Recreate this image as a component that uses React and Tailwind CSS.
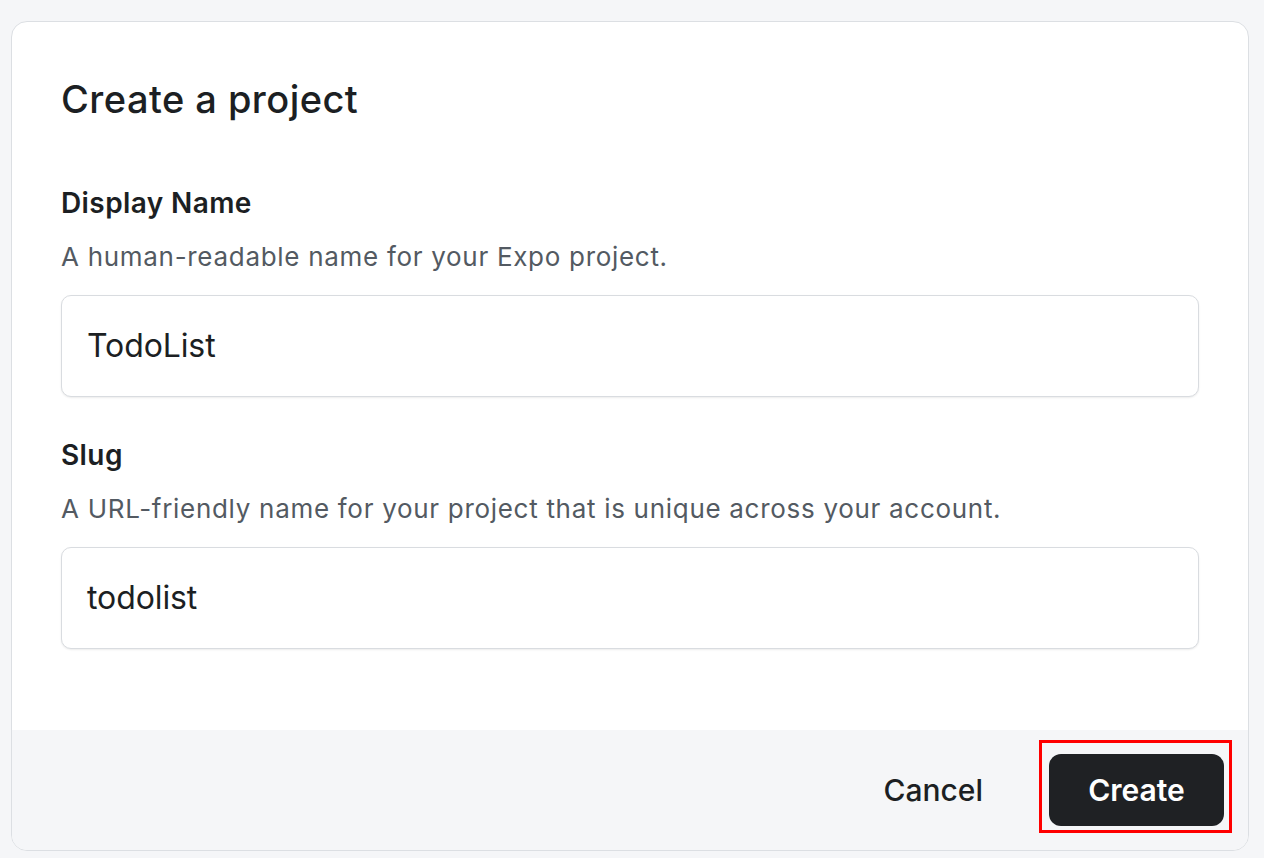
const FIELDS = [
  { label: "Display Name", hint: "A human-readable name for your Expo project.", value: "TodoList" },
  { label: "Slug", hint: "A URL-friendly name for your project that is unique across your account.", value: "todolist" },
];

function Field({ label, hint, value, first }) {
  return (
    <div className={first ? "mt-[63px]" : "mt-[40px]"}>
      <div className="text-[28px] leading-[36px] font-semibold tracking-[0.4px] text-[#1c1f23]">{label}</div>
      <div className="mt-[19px] text-[26px] leading-[34px] tracking-[0.7px] text-[#535a62]">{hint}</div>
      <div className="mt-[21px] h-[102px] flex items-center px-[25px] rounded-[10px] border border-[#d9dce0] bg-white shadow-[0_1px_2px_rgba(0,0,0,0.08)]">
        <span className="text-[32px] tracking-[-0.1px] text-[#1c1f23]">{value}</span>
      </div>
    </div>
  );
}

export default function App() {
  return (
    <div className="min-h-[858px] bg-[#f5f6f8] pt-[21px] pl-[11px]" style={{ fontFamily: "Inter, 'Noto Sans', sans-serif" }}>
      <div className="w-[1238px] rounded-[16px] border border-[#dcdfe3] bg-white overflow-hidden">
        {/* Body */}
        <div className="px-[49px] pt-[54px] pb-[81px]">
          <h1 className="text-[38px] leading-[46px] font-medium tracking-[0.45px] text-[#1c1f23]">Create a project</h1>
          {FIELDS.map((f, i) => (
            <Field key={f.label} {...f} first={i === 0} />
          ))}
        </div>

        {/* Footer */}
        <div className="h-[120px] bg-[#f5f6f8] flex items-center justify-end pr-[24px]">
          <button className="mr-[66px] text-[30px] font-medium text-[#1c1f23]">Cancel</button>
          <div className="relative">
            <button className="w-[175px] h-[72px] rounded-[12px] bg-[#1f2124] text-[30px] font-semibold text-white">
              Create
            </button>
            <div className="absolute left-[-10px] top-[-14px] w-[193px] h-[93px] border-[3px] border-[#ff0000] pointer-events-none" />
          </div>
        </div>
      </div>
    </div>
  );
}
